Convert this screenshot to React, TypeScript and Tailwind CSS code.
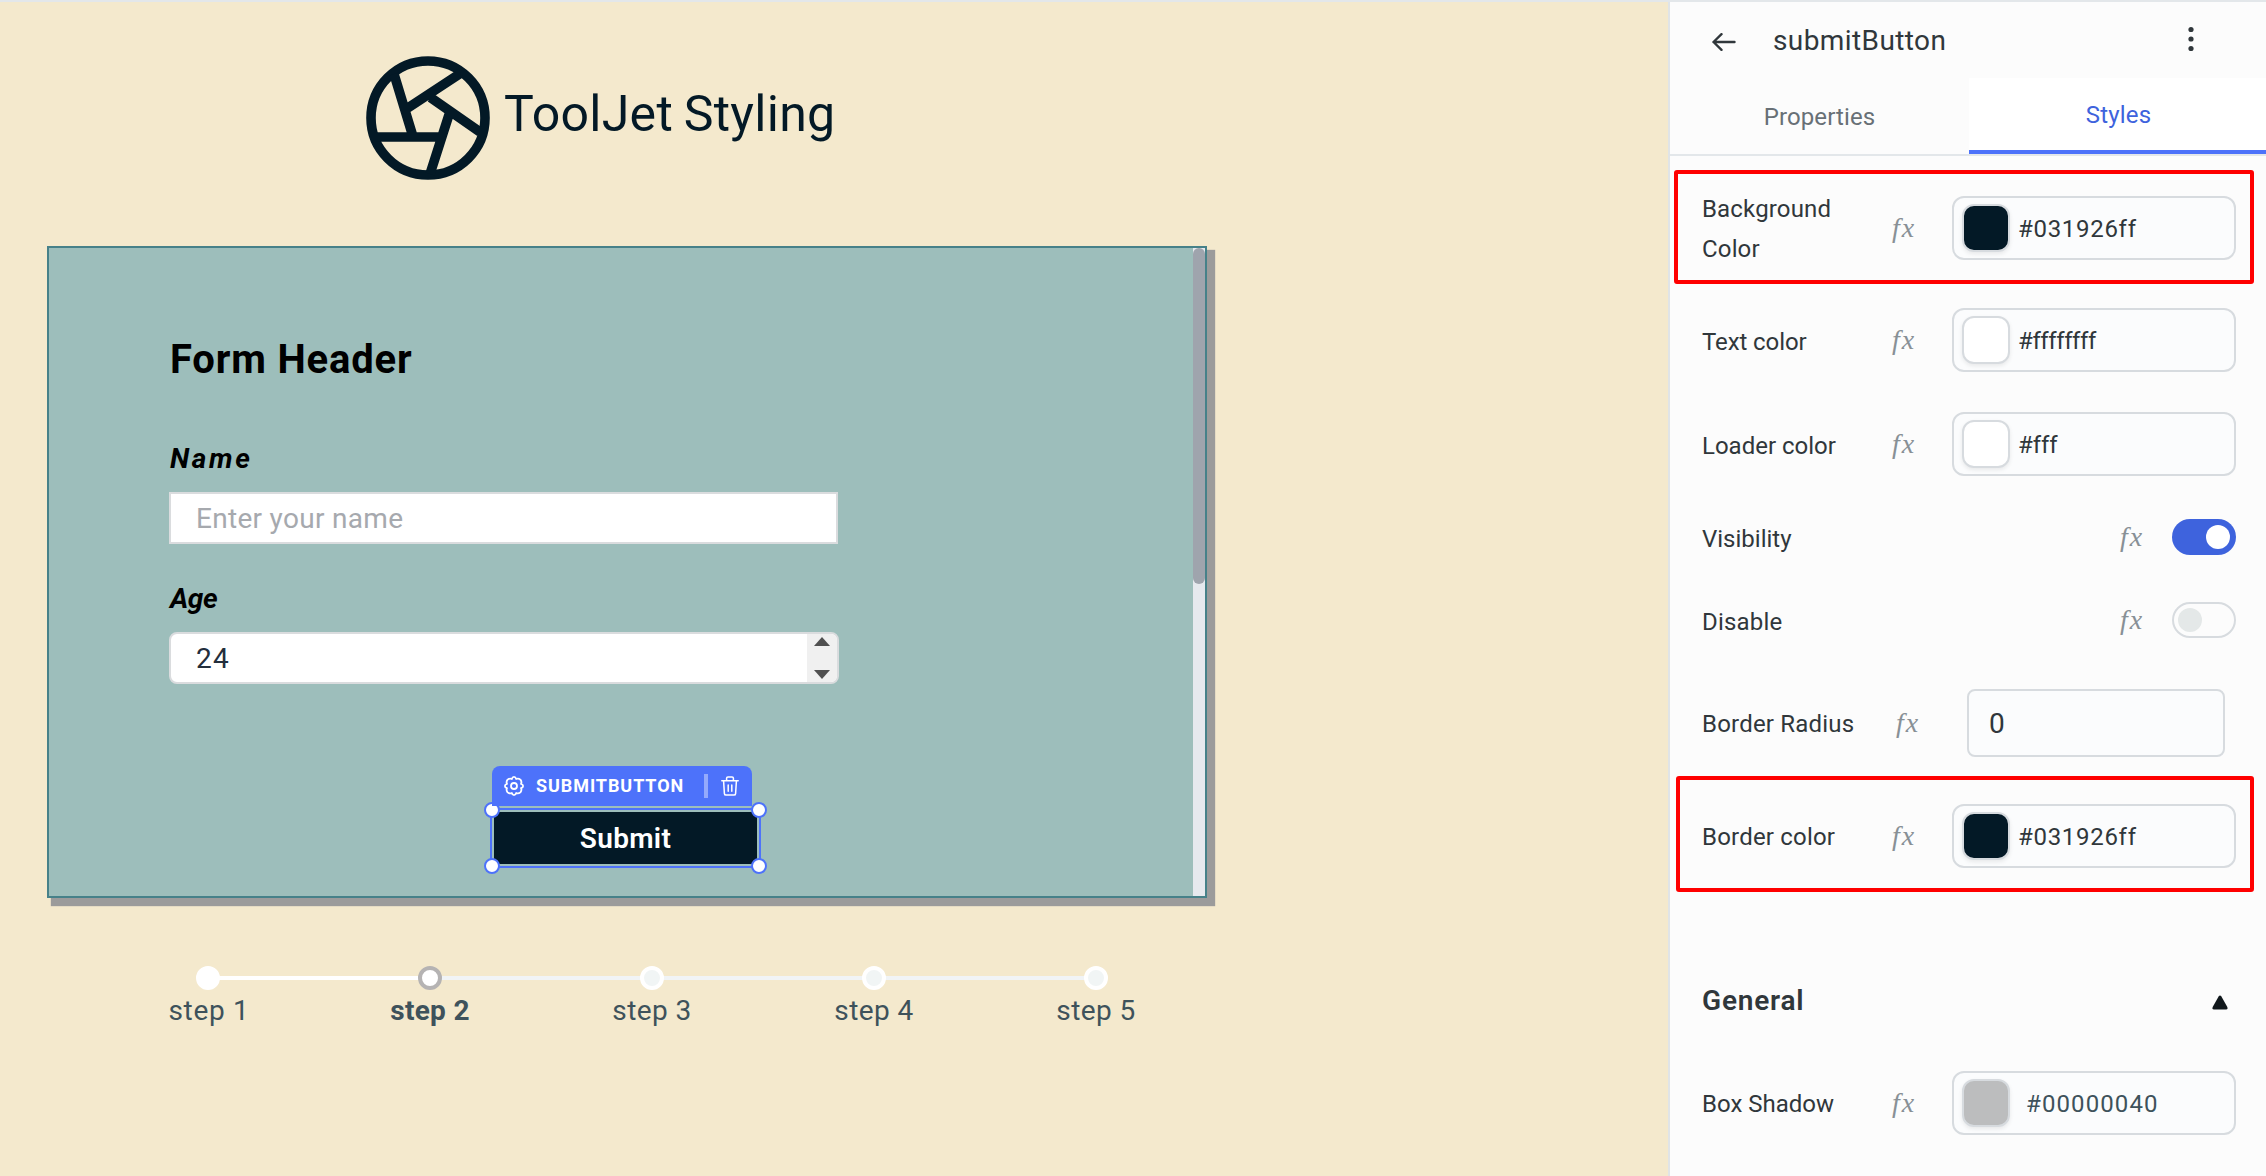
import type { ReactNode } from "react";

function Aperture() {
  return (
    <svg width="124" height="124" viewBox="0 0 124 124" fill="none" stroke="#031926" strokeWidth="9.6">
      <circle cx="62" cy="62" r="57" />
      <path d="M28 18L46.5 79M95 17L41 52.5M64.500 41.500L114 76M84.500 54L64 118M10 81H76" />
    </svg>
  );
}

function Fx({ className = "" }: { className?: string }) {
  return (
    <span className={`w-[26px] shrink-0 font-['Liberation_Serif',serif] text-[28px] leading-[26px] tracking-[2px] whitespace-nowrap text-[#889096] italic ${className}`}>
      fx
    </span>
  );
}

function ColorField({ value, swatch, text }: { value: string; swatch: string; text: string }) {
  return (
    <div className="flex h-16 w-[284px] shrink-0 items-center rounded-xl border-2 border-[#d7dbdf] bg-[#fbfcfd] pl-2">
      <div className={`h-12 w-12 rounded-xl border-2 border-[#d7dbdf] shadow-[0_2px_4px_rgba(0,0,0,0.08)] ${swatch}`} />
      <span className={`pt-[2px] text-2xl leading-8 whitespace-nowrap ${text}`}>{value}</span>
    </div>
  );
}

function ColorRow({ label, children, className }: { label: ReactNode; children: ReactNode; className: string }) {
  return (
    <div className={`flex items-center pl-8 ${className}`}>
      <div className="w-[190px] text-2xl leading-10 text-[#30373b]">{label}</div>
      <Fx className="mr-[34px]" />
      {children}
    </div>
  );
}

function Toggle({ on }: { on: boolean }) {
  return (
    <div
      className={
        on
          ? "flex h-9 w-16 items-center justify-end rounded-full bg-[#3e63dd] pr-1.5"
          : "flex h-9 w-16 items-center rounded-full border-2 border-[#d7dbdf] pl-1"
      }
    >
      <div className={on ? "size-6 rounded-full bg-white" : "size-6 rounded-full bg-[#e4e8e8]"} />
    </div>
  );
}

function Handle({ className }: { className: string }) {
  return <div className={`absolute size-4 rounded-full border-2 border-[#4d72fa] bg-white ${className}`} />;
}

function SubmitWidget() {
  return (
    <div className="relative mt-[82px] ml-[321px] h-[102px] w-[271px]">
      <div className="absolute top-[42px] left-0 h-[60px] w-[271px] border-2 border-[#4d72fa] p-[2px]">
        <div className="flex h-[52px] items-center justify-center bg-[#031926] pt-[2px] text-[28px] leading-8 font-semibold tracking-[0.3px] text-white">
          Submit
        </div>
      </div>
      <Handle className="top-[36px] left-[-6px]" />
      <Handle className="top-[36px] right-[-6px]" />
      <Handle className="top-[92px] left-[-6px]" />
      <Handle className="top-[92px] right-[-6px]" />
      <div className="absolute top-0 left-[2px] flex h-10 w-[260px] items-center rounded-t-lg bg-[#4d72fa] pl-3 text-white">
        <svg width="20" height="20" viewBox="0 0 20 20" fill="none" stroke="white" strokeWidth="1.8" strokeLinejoin="round">
          <path d="M10 .9Q11.600 .9 12.200 3Q14.300 1.900 16.400 3.600Q18.100 5.700 17 7.800Q19.100 8.400 19.100 10Q19.100 11.600 17 12.200Q18.100 14.300 16.400 16.400Q14.300 18.100 12.200 17Q11.600 19.100 10 19.100Q8.400 19.100 7.800 17Q5.700 18.100 3.600 16.400Q1.900 14.300 3 12.200Q.9 11.600 .9 10Q.9 8.400 3 7.800Q1.900 5.700 3.600 3.600Q5.700 1.900 7.800 3Q8.400 .9 10 .9Z" />
          <circle cx="10" cy="10" r="3" />
        </svg>
        <span className="ml-3 w-[168px] text-lg leading-6 font-bold tracking-[0.93px]">SUBMITBUTTON</span>
        <div className="h-6 w-1 bg-white/40" />
        <svg className="ml-[13px]" width="18" height="20" viewBox="0 0 18 20" fill="none" stroke="white" strokeWidth="1.5" strokeLinecap="round" strokeLinejoin="round">
          <path d="M.8 4.800H17.200M5.600 4.600V2.300Q5.600 .9 7 .9H11Q12.400 .9 12.400 2.300V4.600M2.600 5L3.400 17.600Q3.500 19.100 5 19.100H13Q14.500 19.100 14.600 17.600L15.400 5M7.200 9V15.200M10.800 9V15.200" />
        </svg>
      </div>
    </div>
  );
}

function FormPanel() {
  return (
    <div className="mt-[66px] ml-[47px] flex h-[652px] w-[1160px] border-2 border-[#468189] bg-[#9dbebb] shadow-[6px_6px_1px_2px_#9b9b9b]">
      <div className="flex-1 pt-[92px] pl-[120px]">
        <h2 className="pl-px text-[40px] leading-[40px] font-bold tracking-[0.83px] text-black">Form Header</h2>
        <div className="mt-[63px] pl-px text-[28px] leading-8 font-bold tracking-[2.7px] text-black italic">Name</div>
        <div className="mt-[17px] flex h-[52px] w-[669px] items-center border-2 border-[#dadcde] bg-white pt-[2px] pl-[25px] text-[28px] tracking-[0.3px] text-[#a6a9ae]">
          Enter your name
        </div>
        <div className="mt-[39px] pl-px text-[28px] leading-8 font-bold tracking-[-0.4px] text-black italic">Age</div>
        <div className="mt-[17px] flex h-[52px] w-[670px] overflow-hidden rounded-lg border-2 border-[#dadcde] bg-white pl-[25px]">
          <span className="flex-1 text-[28px] leading-[50px] tracking-[1.2px] text-[#232e3c]">24</span>
          <div className="flex w-[30px] flex-col items-center justify-between bg-[#f0f0f0] pt-[3px] pb-[3px]">
            <svg width="16" height="9" viewBox="0 0 16 9" fill="#505050">
              <path d="M8 0L16 9H0Z" />
            </svg>
            <svg width="16" height="9" viewBox="0 0 16 9" fill="#505050">
              <path d="M0 0H16L8 9Z" />
            </svg>
          </div>
        </div>
        <SubmitWidget />
      </div>
      <div className="w-3 bg-[#e6e9ee]">
        <div className="h-[336px] rounded-full bg-[#9fa4ad]" />
      </div>
    </div>
  );
}

const steps = [
  { name: "step 1", dot: "bg-white border-white", line: "bg-white", text: "pl-[2px] tracking-[0.7px]" },
  { name: "step 2", dot: "bg-white border-[#b5b3b3]", line: "bg-[#f1f4f6]", text: "font-bold tracking-[0.3px]" },
  { name: "step 3", dot: "bg-[#f1f5f5] border-white", line: "bg-[#f1f4f6]", text: "tracking-[0.4px]" },
  { name: "step 4", dot: "bg-[#f1f5f5] border-white", line: "bg-[#f1f4f6]", text: "tracking-[0.4px]" },
  { name: "step 5", dot: "bg-[#f1f5f5] border-white", line: "", text: "tracking-[0.4px]" },
];

function Steps() {
  return (
    <div className="mt-[68px] ml-[97px] flex">
      {steps.map((s) => (
        <div key={s.name} className="flex w-[222px] flex-col items-center">
          <div className="relative flex h-6 w-full justify-center">
            {s.line && <div className={`absolute top-2.5 left-1/2 h-1 w-full ${s.line}`} />}
            <div className={`relative z-10 size-6 rounded-full border-4 ${s.dot}`} />
          </div>
          <span className={`mt-[5px] text-[28px] leading-8 text-[#3e525b] ${s.text}`}>{s.name}</span>
        </div>
      ))}
    </div>
  );
}

function Inspector() {
  return (
    <aside className="flex w-[598px] flex-col border-l-2 border-[#e0e4e7] bg-[#fcfcfc]">
      <header className="flex h-[76px] items-center pl-[42px] text-[#30373b]">
        <svg className="mt-1" width="24" height="18" viewBox="0 0 24 18" fill="none" stroke="#30373b" strokeWidth="2.4" strokeLinecap="round" strokeLinejoin="round">
          <path d="M22.500 9H1.500M9.500 1.200L1.500 9L9.500 16.800" />
        </svg>
        <span className="mt-[2px] ml-[37px] w-[415px] text-[28px] leading-8 tracking-[0.4px]">submitButton</span>
        <svg className="mb-[2px]" width="6" height="26" viewBox="0 0 6 26" fill="#30373b">
          <circle cx="3" cy="3.500" r="2.600" />
          <circle cx="3" cy="13" r="2.600" />
          <circle cx="3" cy="22.500" r="2.600" />
        </svg>
      </header>
      <nav className="flex h-[78px] border-b-2 border-[#e3e7ea] text-2xl">
        <div className="flex w-[299px] justify-center pt-[23px] leading-8 tracking-[0.1px] text-[#687076]">Properties</div>
        <div className="flex flex-1 justify-center border-b-4 border-[#4d72fa] bg-white pt-[21px] pl-[2px] leading-8 tracking-[0.2px] text-[#3e63dd]">Styles</div>
      </nav>

      <div className="mt-[14px] ml-1 flex h-[114px] w-[580px] items-center rounded-[3px] border-4 border-[#ff0000] pt-[2px]">
        <ColorRow className="ml-[-8px]" label={<span className="block w-[140px] pt-[2px] tracking-[0.16px]">Background Color</span>}>
          <ColorField value="#031926ff" swatch="bg-[#031926]" text="ml-[8px] tracking-[0.7px] text-[#30373b]" />
        </ColorRow>
      </div>
      <ColorRow className="mt-6" label={<span className="block pt-[3px] tracking-[-0.1px]">Text color</span>}>
        <ColorField value="#ffffffff" swatch="bg-white" text="ml-[8px] tracking-[-0.4px] text-[#30373b]" />
      </ColorRow>
      <ColorRow className="mt-10" label={<span className="block pt-[3px]">Loader color</span>}>
        <ColorField value="#fff" swatch="bg-white" text="ml-[8px] tracking-[-0.1px] text-[#30373b]" />
      </ColorRow>
      <div className="mt-[43px] flex h-9 items-center pl-8">
        <span className="w-[418px] pt-[3px] text-2xl text-[#30373b]">Visibility</span>
        <Fx className="mr-[26px]" />
        <Toggle on />
      </div>
      <div className="mt-[47px] flex h-9 items-center pl-8">
        <span className="w-[418px] pt-[3px] text-2xl tracking-[0.2px] text-[#30373b]">Disable</span>
        <Fx className="mr-[26px]" />
        <Toggle on={false} />
      </div>
      <div className="mt-[51px] flex h-[68px] items-center pl-8">
        <span className="w-[194px] pt-[2px] text-2xl tracking-[0.2px] text-[#30373b]">Border Radius</span>
        <Fx className="mr-[45px]" />
        <div className="flex h-[68px] w-[258px] items-center rounded-lg border-2 border-[#d7dbdf] bg-[#fbfcfd] pt-px pl-5 text-[28px] text-[#30373b]">0</div>
      </div>
      <div className="mt-[19px] ml-[6px] flex h-[116px] w-[578px] items-center rounded-[3px] border-4 border-[#ff0000] pt-1">
        <ColorRow className="ml-[-10px]" label={<span className="block pt-px tracking-[0.2px]">Border color</span>}>
          <ColorField value="#031926ff" swatch="bg-[#031926]" text="ml-[8px] tracking-[0.7px] text-[#30373b]" />
        </ColorRow>
      </div>
      <div className="mt-[92px] flex h-8 items-center pl-8">
        <span className="w-[510px] pt-[2px] text-[28px] leading-8 font-semibold tracking-[0.8px] text-[#30373b]">General</span>
        <svg className="mt-1" width="16" height="15" viewBox="0 0 16 15" fill="#11181c">
          <path d="M6.600 1.400Q8 -.6 9.400 1.400L15.300 12Q16 14.500 14 14.500H2Q0 14.500 .7 12Z" />
        </svg>
      </div>
      <ColorRow className="mt-[55px]" label={<span className="block pt-[2px]">Box Shadow</span>}>
        <ColorField value="#00000040" swatch="bg-[#bcbdbe]" text="ml-4 tracking-[1.1px] text-[#3e525b]" />
      </ColorRow>
    </aside>
  );
}

export default function App() {
  return (
    <div className="flex h-[1176px] w-[2266px] flex-col overflow-hidden border-t-2 border-[#e3e7ea] bg-[#f4e9cd] font-[Roboto,sans-serif]">
      <div className="flex flex-1">
        <main className="w-[1668px]">
          <div className="flex pt-[54px] pl-[366px]">
            <Aperture />
            <span className="mt-[26px] ml-[14px] text-[50px] leading-[64px] tracking-[0.28px] text-[#031926] [word-spacing:-2px]">ToolJet Styling</span>
          </div>
          <FormPanel />
          <Steps />
        </main>
        <Inspector />
      </div>
    </div>
  );
}
